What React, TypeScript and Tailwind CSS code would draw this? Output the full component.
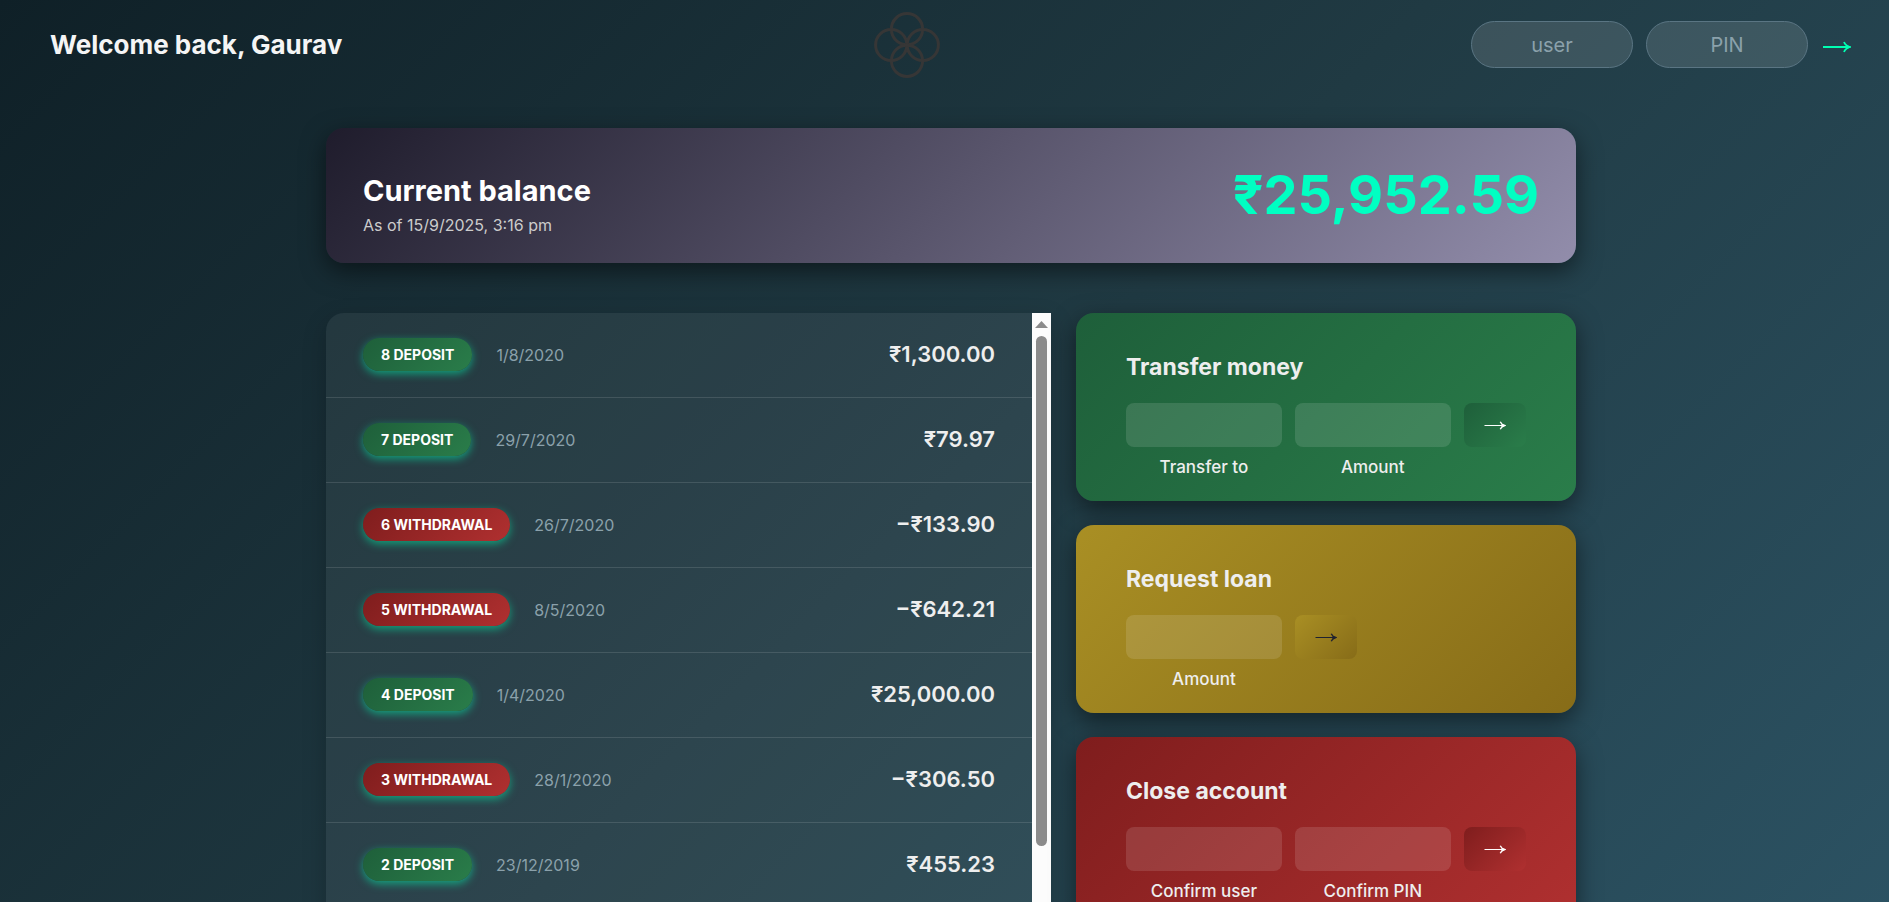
import React from "react";

type Movement = { id: number; type: "deposit" | "withdrawal"; date: string; amount: string };

const movements: Movement[] = [
  { id: 8, type: "deposit", date: "1/8/2020", amount: "₹1,300.00" },
  { id: 7, type: "deposit", date: "29/7/2020", amount: "₹79.97" },
  { id: 6, type: "withdrawal", date: "26/7/2020", amount: "−₹133.90" },
  { id: 5, type: "withdrawal", date: "8/5/2020", amount: "−₹642.21" },
  { id: 4, type: "deposit", date: "1/4/2020", amount: "₹25,000.00" },
  { id: 3, type: "withdrawal", date: "28/1/2020", amount: "−₹306.50" },
  { id: 2, type: "deposit", date: "23/12/2019", amount: "₹455.23" },
  { id: 1, type: "deposit", date: "18/11/2019", amount: "₹200.00" },
];

const green = "bg-linear-[135deg,#1e5f3a,#2a7d4a]";
const yellow = "bg-linear-[135deg,#a98f24,#876c18]";
const red = "bg-linear-[135deg,#7f1d1d,#b03030]";

function Arrow({ className, shaft }: { className: string; shaft: number }) {
  return (
    <svg viewBox="0 0 28 12" className={className} fill="none" stroke="currentColor" aria-hidden="true">
      <path d="M0 6H26" strokeWidth={shaft} />
      <path d="M21 1Q22.500 4.800 27 6Q22.500 7.200 21 11" strokeWidth="1.800" />
      <path d="M23 3.500L28 6L23 8.500Z" fill="currentColor" stroke="none" />
    </svg>
  );
}

function Logo() {
  return (
    <svg viewBox="0 0 66 66" className="size-[66px]" fill="none" stroke="#363636" strokeWidth="3" aria-hidden="true">
      <circle cx="33" cy="17.2" r="15.6" />
      <circle cx="17.2" cy="33" r="15.6" />
      <circle cx="48.8" cy="33" r="15.6" />
      <circle cx="33" cy="48.8" r="15.6" />
    </svg>
  );
}

function Operation({
  title,
  fields,
  tone,
  arrow,
}: {
  title: string;
  fields: string[];
  tone: string;
  arrow: string;
}) {
  return (
    <section className={`rounded-[18px] px-[50px] pt-[35px] pb-[22px] shadow-[0_8px_24px_rgba(0,0,0,0.5)] ${tone}`}>
      <h2 className="mb-[17px] text-[23px] leading-[38px] font-bold">{title}</h2>
      <form className="grid grid-cols-[5fr_5fr_2fr] gap-x-[13px]" onSubmit={(e) => e.preventDefault()}>
        {fields.map((field) => (
          <label key={field} className="flex flex-col-reverse gap-2 text-center text-[17px] leading-6 font-medium">
            {field}
            <input className="h-11 w-full rounded-lg bg-white/12 text-center outline-none" />
          </label>
        ))}
        <button
          type="submit"
          aria-label={title}
          className={`flex h-11 w-[62px] items-center justify-center rounded-lg pt-px ${tone} ${arrow}`}
        >
          <Arrow className="h-[9px] w-[22px]" shaft={1.4} />
        </button>
      </form>
    </section>
  );
}

export default function App() {
  return (
    <div className="min-h-screen bg-linear-[135deg,#0f2027,#203a43,#2c5364] pb-12 font-['Inter','Noto_Sans',sans-serif] text-[#eeeeee]">
      <nav className="flex h-[89px] items-center justify-between pr-[38px] pl-[50px]">
        <p className="text-[26px] leading-9 font-bold text-[#f5f5f5]">Welcome back, Gaurav</p>
        <Logo />
        <form className="flex items-center gap-[13px]" onSubmit={(e) => e.preventDefault()}>
          <input
            aria-label="user"
            placeholder="user"
            className="h-[47px] w-[162px] rounded-3xl border border-[#5a7583] bg-white/12 text-center text-xl outline-none placeholder:text-[#8ba1ab]"
          />
          <input
            aria-label="PIN"
            placeholder="PIN"
            className="h-[47px] w-[162px] rounded-3xl border border-[#5a7583] bg-white/12 text-center text-xl outline-none placeholder:text-[#8ba1ab]"
          />
          <button type="submit" aria-label="Log in" className="flex w-[30px] justify-end pt-1 text-[#00ffb2]">
            <Arrow className="h-3 w-7" shaft={2} />
          </button>
        </form>
      </nav>

      <main className="mx-auto mt-[39px] w-full max-w-[1263px] pl-[13px]">
        <section className="flex h-[135px] items-center justify-between rounded-[18px] bg-linear-[135deg,#1f1c2c,#928dab] px-[37px] shadow-[0_8px_24px_rgba(0,0,0,0.5)]">
          <div className="pt-[22px]">
            <h1 className="text-[29px] leading-9 font-bold text-white">Current balance</h1>
            <p className="text-base leading-8 text-[#cccccc]">As of 15/9/2025, 3:16 pm</p>
          </div>
          <p className="pb-0.5 text-[54px] leading-none font-bold text-[#00ffc2]">₹25,952.59</p>
        </section>

        <div className="mt-[50px] grid grid-cols-[29fr_20fr] gap-[25px]">
          <div className="flex h-[613px] overflow-hidden rounded-l-[18px] bg-white/6 shadow-[0_8px_24px_rgba(0,0,0,0.2)]">
            <ul className="flex-1 overflow-y-auto [scrollbar-width:none]">
              {movements.map((m) => (
                <li key={m.id} className="flex h-[85px] items-center border-b border-white/12 px-[37px] pb-px">
                  <span
                    className={`rounded-full px-[18px] text-sm leading-[33px] font-bold text-white uppercase shadow-[0_3px_8px_rgba(0,255,178,0.5)] ${
                      m.type === "deposit" ? green : red
                    }`}
                  >
                    {m.id} {m.type}
                  </span>
                  <span className="ml-6 text-base text-[#8ba1ab]">{m.date}</span>
                  <span className="ml-auto text-[22px] font-semibold">{m.amount}</span>
                </li>
              ))}
            </ul>
            <div className="flex w-[19px] flex-col items-center bg-[#fcfcfc] pt-2" aria-hidden="true">
              <svg viewBox="0 0 13 7" className="h-[7px] w-[13px]" fill="#8b8b8b">
                <path d="M0 7L6.500 0L13 7Z" />
              </svg>
              <div className="mt-2 h-[510px] w-[11px] rounded-full bg-[#8b8b8b]" />
            </div>
          </div>

          <div className="flex flex-col gap-6">
            <Operation title="Transfer money" fields={["Transfer to", "Amount"]} tone={green} arrow="text-white" />
            <Operation title="Request loan" fields={["Amount"]} tone={yellow} arrow="text-[#1f2230]" />
            <Operation title="Close account" fields={["Confirm user", "Confirm PIN"]} tone={red} arrow="text-white" />
          </div>
        </div>
      </main>
    </div>
  );
}
